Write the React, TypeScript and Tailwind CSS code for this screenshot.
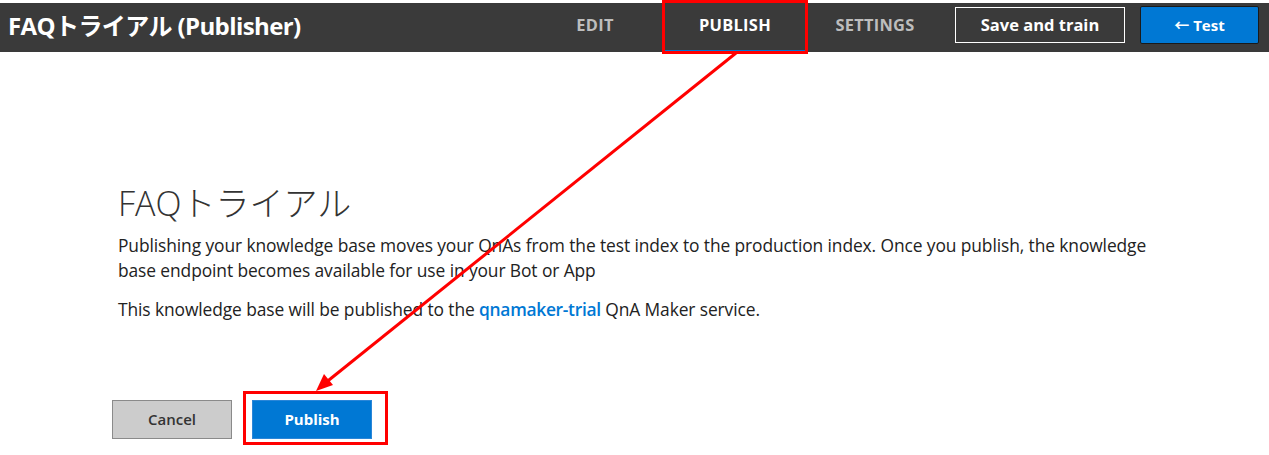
import React from 'react'

const sans = "font-['Open_Sans','Noto_Sans_CJK_JP',sans-serif]"

export default function App() {
  return (
    <div className={`relative w-[1269px] h-[455px] bg-white overflow-hidden ${sans}`}>
      {/* top bar */}
      <div className="mt-[3px] h-[49px] bg-[#3a3a3a] flex items-center">
        <div className="pl-[8px] pb-[4px] text-white text-[24px] font-bold tracking-[-0.6px]">FAQトライアル (Publisher)</div>
        <div className="ml-auto flex h-full">
          <div className="w-[140px] flex items-center justify-center pb-[4px] text-[16.4px] font-bold text-[#bdbdbd] tracking-[0.3px]">EDIT</div>
          <div className="w-[140px] flex items-center justify-center pb-[2px] text-[16.4px] font-bold text-white tracking-[0.3px] border-b-[2px] border-[#0078d4]">PUBLISH</div>
          <div className="w-[140px] flex items-center justify-center pb-[4px] text-[16.4px] font-bold text-[#bdbdbd] tracking-[0.3px]">SETTINGS</div>
        </div>
        <div className="ml-[10px] w-[170px] h-[36px] mb-[5px] border border-white flex items-center justify-center text-white text-[16.5px] font-bold">Save and train</div>
        <div className="ml-[15px] mr-[10px] w-[119px] h-[38px] mb-[5px] bg-[#0078d4] border border-[#1a1a1a] rounded-[2px] flex items-center justify-center text-white text-[15px] font-bold">← Test</div>
      </div>

      {/* body */}
      <div className="pl-[118px] pt-[131px]">
        <h1 className="text-[34px] font-light text-[#333] leading-[40px]">FAQトライアル</h1>
        <p className="mt-[10px] text-[17.4px] text-[#222] leading-[25px] w-[1040px] tracking-[-0.1px]">
          Publishing your knowledge base moves your QnAs from the test index to the production index. Once you publish, the knowledge base endpoint becomes available for use in your Bot or App
        </p>
        <p className="mt-[14px] text-[17.4px] text-[#222] leading-[25px] tracking-[-0.1px]">
          This knowledge base will be published to the{' '}
          <span className="text-[#0078d4] font-semibold tracking-[-0.3px]">qnamaker-trial</span> QnA Maker service.
        </p>
        <div className="mt-[78px] ml-[-6px] flex gap-[20px]">
          <button className="w-[120px] h-[39px] bg-[#cccccc] border border-[#8a8a8a] text-[15px] text-[#333] font-semibold">Cancel</button>
          <button className="w-[120px] h-[39px] bg-[#0078d4] border border-[#2a86d8] text-[15px] text-white font-bold">Publish</button>
        </div>
      </div>

      {/* annotations */}
      <div className="absolute left-[662px] top-[0px] w-[146px] h-[54px] border-[3px] border-[#ff0000]" />
      <div className="absolute left-[243px] top-[391px] w-[145px] h-[54px] border-[3px] border-[#ff0000]" />
      <svg className="absolute inset-0" width="1269" height="455">
        <line x1="736" y1="53" x2="324" y2="384" stroke="#ff0000" strokeWidth="3" />
        <polygon points="316,391 324,374 333,385" fill="#ff0000" />
      </svg>
    </div>
  )
}
